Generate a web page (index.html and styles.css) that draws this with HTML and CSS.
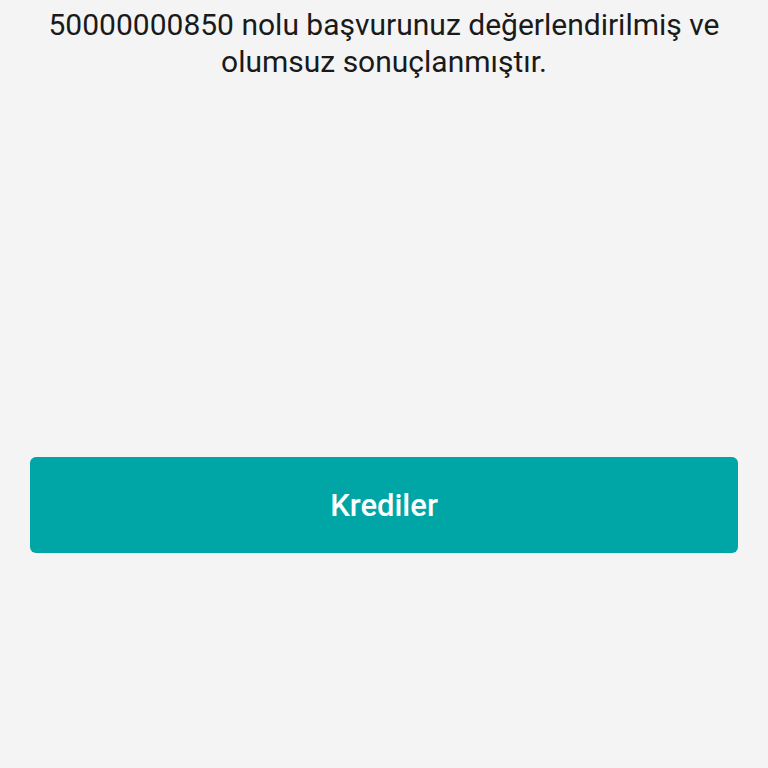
FILE: index.html
```html
<!DOCTYPE html>
<html lang="tr">
<head>
  <meta charset="UTF-8" />
  <meta name="viewport" content="width=device-width, initial-scale=1.0"/>
  <title>Başvuru Sonucu</title>
  <link rel="stylesheet" href="styles.css">
</head>
<body>

<div class="result">
  <p class="message">50000000850 nolu başvurunuz değerlendirilmiş ve olumsuz sonuçlanmıştır.</p>
</div>

<div class="actions">
  <button class="button">Krediler</button>
</div>

</body>
</html>
```

FILE: styles.css
```css
body {
  font-family: Roboto, 'Noto Sans', sans-serif;
  background-color: #f4f4f4;
  margin: 0;
  width: 768px;
  height: 768px;
  overflow: hidden;
}

.result {
  padding: 6px 30px 0;
  height: 451px;
}

.message {
  margin: 0;
  font-size: 30px;
  line-height: 37px;
  color: #1a1a1a;
  text-align: center;
}

.actions {
  padding: 0 30px;
}

.button {
  display: block;
  width: 100%;
  height: 96px;
  border: none;
  border-radius: 6px;
  background-color: #00a6a6;
  color: #fff;
  font-family: Roboto, 'Noto Sans', sans-serif;
  font-size: 31px;
  font-weight: 500;
  cursor: pointer;
}
```
